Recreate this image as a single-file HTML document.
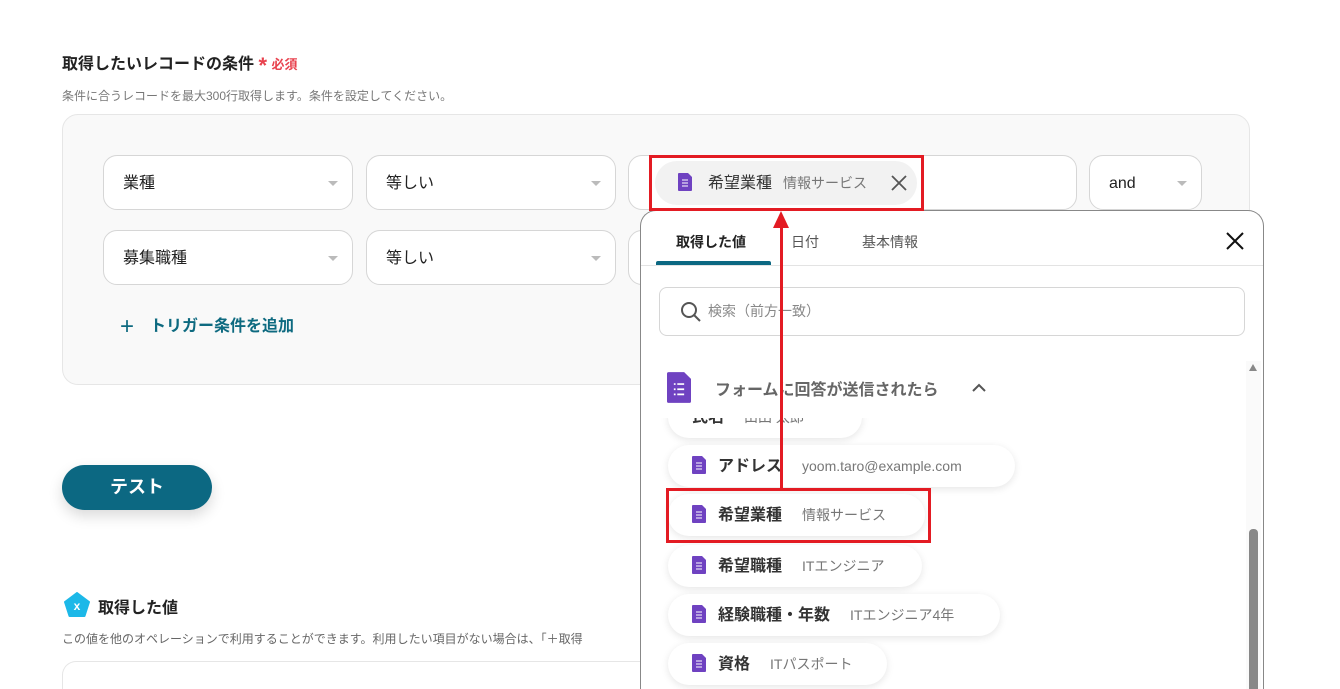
<!DOCTYPE html>
<html><head><meta charset="utf-8"><style>
*{box-sizing:border-box;margin:0;padding:0}
html,body{width:1340px;height:689px;overflow:hidden}
body{background:#fff;font-family:"Liberation Sans","Noto Sans CJK JP",sans-serif;color:#222;position:relative}
.a{position:absolute}
.sel{position:absolute;height:55px;background:#fff;border:1px solid #d6d6d6;border-radius:14px;font-size:16px;padding-left:19px;line-height:55px;color:#222}
.sel .c{position:absolute;right:14px;top:25px;width:0;height:0;border-left:5px solid transparent;border-right:5px solid transparent;border-top:5px solid #bbb}
.pill{position:absolute;left:668px;height:42px;background:#fff;border-radius:21px;box-shadow:0 2px 8px rgba(0,0,0,.1);font-size:16px;font-weight:bold;line-height:42px;padding-left:24px;color:#333;white-space:nowrap}
.pill .v{font-weight:normal;font-size:14px;color:#777;margin-left:20px}
.pill svg{vertical-align:-3px;margin-right:12px}
</style></head><body>
<div class="a" style="left:62px;top:50px;font-size:16px;font-weight:bold">取得したいレコードの条件 <span style="color:#e8424e;font-size:22px;vertical-align:-4px">*</span> <span style="color:#e8424e;font-size:13px">必須</span></div>
<div class="a" style="left:62px;top:87px;font-size:12px;color:#777">条件に合うレコードを最大300行取得します。条件を設定してください。</div>
<div class="a" style="left:62px;top:114px;width:1188px;height:271px;background:#f9f9f9;border:1px solid #e6e6e6;border-radius:16px"></div>
<div class="sel" style="left:103px;top:155px;width:250px">業種<i class="c"></i></div>
<div class="sel" style="left:366px;top:155px;width:250px">等しい<i class="c"></i></div>
<div class="sel" style="left:628px;top:155px;width:449px"></div>
<div class="sel" style="left:1089px;top:155px;width:113px">and<i class="c"></i></div>
<div class="sel" style="left:103px;top:230px;width:250px">募集職種<i class="c"></i></div>
<div class="sel" style="left:366px;top:230px;width:250px">等しい<i class="c"></i></div>
<div class="sel" style="left:628px;top:230px;width:449px"></div>
<div class="a" style="left:120px;top:312px;font-size:16px;font-weight:bold;color:#0e6a80"><span style="font-size:24px;font-weight:normal;vertical-align:-3px;margin-right:16px">+</span>トリガー条件を追加</div>
<div class="a" style="left:655px;top:161px;width:262px;height:44px;background:#f2f2f2;border-radius:22px;font-size:16px;line-height:44px;padding-left:23px;color:#333;white-space:nowrap"><svg width="14" height="18" viewBox="0 0 14 18" style="vertical-align:-3px;margin-right:16px"><path d="M1 0h9l4 4v13a1 1 0 0 1-1 1H1a1 1 0 0 1-1-1V1a1 1 0 0 1 1-1z" fill="#6f42c1"/><path d="M4 7h6M4 10h6M4 13h6" stroke="#fff" stroke-width="1"/></svg>希望業種<span style="font-size:14px;color:#777;margin-left:11px">情報サービス</span><svg class="a" style="right:10px;top:14px" width="16" height="16" viewBox="0 0 16 16"><path d="M1 1l14 14M15 1L1 15" stroke="#555" stroke-width="1.8"/></svg></div>
<div class="a" style="left:62px;top:465px;width:150px;height:45px;background:#0c6882;border-radius:23px;color:#fff;font-size:18px;font-weight:bold;text-align:center;line-height:45px;box-shadow:0 6px 14px rgba(0,0,0,.15)">テスト</div>
<svg class="a" style="left:64px;top:592px" width="26" height="26" viewBox="0 0 26 26"><path d="M13 1L25 10 20.5 24H5.5L1 10z" fill="#1cb8e8" stroke="#1cb8e8" stroke-linejoin="round" stroke-width="2"/><text x="13" y="18" font-size="12" fill="#fff" text-anchor="middle" font-weight="bold" font-family="Liberation Sans">x</text></svg>
<div class="a" style="left:98px;top:594px;font-size:16px;font-weight:bold">取得した値</div>
<div class="a" style="left:62px;top:630px;font-size:12px;color:#666;white-space:nowrap">この値を他のオペレーションで利用することができます。利用したい項目がない場合は、「＋取得</div>
<div class="a" style="left:62px;top:661px;width:700px;height:28px;border:1px solid #e6e6e6;border-bottom:none;border-radius:14px 14px 0 0"></div>
<!-- popup -->
<div class="a" style="left:640px;top:210px;width:624px;height:479px;background:#fff;border:1px solid #888;border-bottom:none;border-radius:16px 16px 0 0;overflow:hidden">
 <div class="a" style="left:35px;top:21px;font-size:14px;font-weight:bold;color:#222">取得した値</div>
 <div class="a" style="left:150px;top:21px;font-size:14px;color:#555">日付</div>
 <div class="a" style="left:221px;top:21px;font-size:14px;color:#555">基本情報</div>
 <div class="a" style="left:15px;top:50px;width:115px;height:4px;background:#0c6882;border-radius:2px 2px 0 0"></div>
 <div class="a" style="left:0;top:54px;width:624px;height:1px;background:#e3e3e3"></div>
 <svg class="a" style="left:585px;top:21px" width="18" height="18" viewBox="0 0 18 18"><path d="M1 1l16 16M17 1L1 17" stroke="#111" stroke-width="2"/></svg>
 <div class="a" style="left:18px;top:76px;width:586px;height:49px;border:1px solid #d6d6d6;border-radius:8px;font-size:14px;color:#888;line-height:47px;padding-left:48px">検索（前方一致）
  <svg class="a" style="left:20px;top:13px" width="22" height="22" viewBox="0 0 22 22"><circle cx="9" cy="9" r="7" fill="none" stroke="#555" stroke-width="2"/><path d="M14 14l6 6" stroke="#555" stroke-width="2"/></svg></div>
 <div class="a" style="left:605px;top:150px;width:15px;height:350px;background:#fafafa"></div>
 <div class="a" style="left:608px;top:153px;border-left:4px solid transparent;border-right:4px solid transparent;border-bottom:7px solid #888"></div>
 <div class="a" style="left:608px;top:318px;width:9px;height:200px;background:#888;border-radius:4px"></div>
 <svg class="a" style="left:26px;top:161px" width="24" height="31" viewBox="0 0 14 18"><path d="M1 0h9l4 4v13a1 1 0 0 1-1 1H1a1 1 0 0 1-1-1V1a1 1 0 0 1 1-1z" fill="#6f42c1"/><path d="M4 7h1M6 7h4M4 10h1M6 10h4M4 13h1M6 13h4" stroke="#fff" stroke-width="1"/></svg>
 <div class="a" style="left:74px;top:165px;font-size:16px;font-weight:bold;color:#666">フォームに回答が送信されたら</div>
 <svg class="a" style="left:331px;top:172px" width="14" height="10" viewBox="0 0 14 10"><path d="M1 8l6-6 6 6" fill="none" stroke="#555" stroke-width="2"/></svg>
</div>
<div class="a" style="left:650px;top:418px;width:600px;height:271px;overflow:hidden">
 <div class="pill" style="left:18px;top:-22px;width:194px">氏名<span class="v">山田 太郎</span></div>
</div>
<div class="pill" style="top:445px;width:347px"><svg width="14" height="18" viewBox="0 0 14 18"><path d="M1 0h9l4 4v13a1 1 0 0 1-1 1H1a1 1 0 0 1-1-1V1a1 1 0 0 1 1-1z" fill="#6f42c1"/><path d="M4 7h6M4 10h6M4 13h6" stroke="#fff"/></svg>アドレス<span class="v">yoom.taro@example.com</span></div>
<div class="pill" style="top:494px;width:257px"><svg width="14" height="18" viewBox="0 0 14 18"><path d="M1 0h9l4 4v13a1 1 0 0 1-1 1H1a1 1 0 0 1-1-1V1a1 1 0 0 1 1-1z" fill="#6f42c1"/><path d="M4 7h6M4 10h6M4 13h6" stroke="#fff"/></svg>希望業種<span class="v">情報サービス</span></div>
<div class="pill" style="top:545px;width:254px"><svg width="14" height="18" viewBox="0 0 14 18"><path d="M1 0h9l4 4v13a1 1 0 0 1-1 1H1a1 1 0 0 1-1-1V1a1 1 0 0 1 1-1z" fill="#6f42c1"/><path d="M4 7h6M4 10h6M4 13h6" stroke="#fff"/></svg>希望職種<span class="v">ITエンジニア</span></div>
<div class="pill" style="top:594px;width:332px"><svg width="14" height="18" viewBox="0 0 14 18"><path d="M1 0h9l4 4v13a1 1 0 0 1-1 1H1a1 1 0 0 1-1-1V1a1 1 0 0 1 1-1z" fill="#6f42c1"/><path d="M4 7h6M4 10h6M4 13h6" stroke="#fff"/></svg>経験職種・年数<span class="v">ITエンジニア4年</span></div>
<div class="pill" style="top:643px;width:219px"><svg width="14" height="18" viewBox="0 0 14 18"><path d="M1 0h9l4 4v13a1 1 0 0 1-1 1H1a1 1 0 0 1-1-1V1a1 1 0 0 1 1-1z" fill="#6f42c1"/><path d="M4 7h6M4 10h6M4 13h6" stroke="#fff"/></svg>資格<span class="v">ITパスポート</span></div>
<!-- red annotations -->
<div class="a" style="left:649px;top:155px;width:275px;height:56px;border:3px solid #e31b23"></div>
<div class="a" style="left:666px;top:488px;width:265px;height:55px;border:3px solid #e31b23"></div>
<div class="a" style="left:780px;top:222px;width:3px;height:266px;background:#e31b23"></div>
<div class="a" style="left:773px;top:211px;border-left:8px solid transparent;border-right:8px solid transparent;border-bottom:17px solid #e31b23"></div>
</body></html>
